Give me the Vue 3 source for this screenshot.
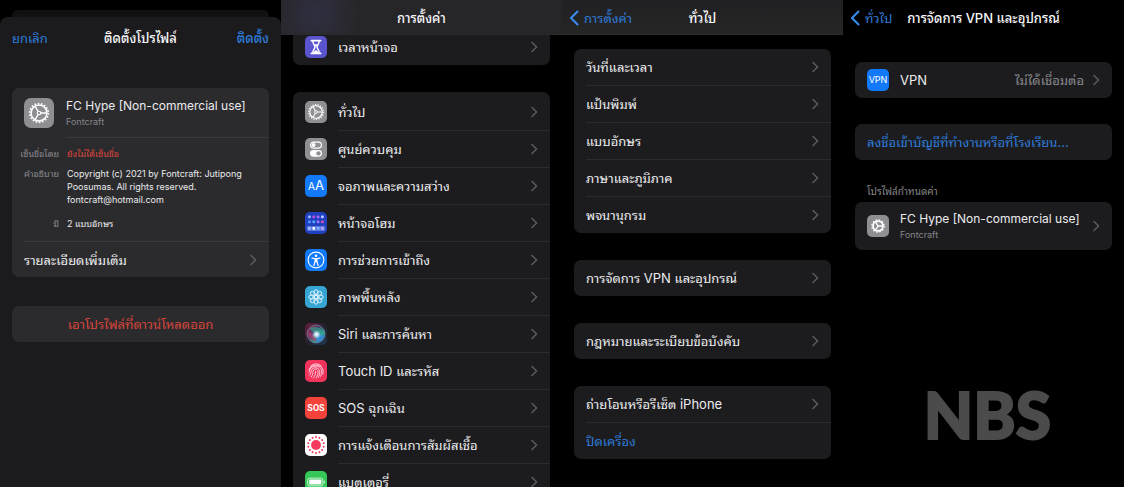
<script setup>
import { h } from 'vue'

const GearIcon = () =>
  h('svg', { viewBox: '0 0 24 24', 'aria-hidden': 'true', fill: 'none', stroke: '#fff' }, [
    h('circle', { cx: 12, cy: 12, r: 8, 'stroke-width': 1.4, 'stroke-dasharray': '1.4 1.393' }),
    h('circle', { cx: 12, cy: 12, r: 6.8, 'stroke-width': 1.3 }),
    h('circle', { cx: 12, cy: 12, r: 1.5, 'stroke-width': 1 }),
    h('path', { d: 'M13.6 12H18.4M11.2 10.6 8.7 6.3M11.2 13.4 8.7 17.7', 'stroke-width': 1.1 }),
  ])

const BoldGearIcon = () =>
  h('svg', { viewBox: '0 0 24 24', 'aria-hidden': 'true', fill: 'none', stroke: '#fff' }, [
    h('circle', { cx: 12, cy: 12, r: 6.7, 'stroke-width': 1.4, 'stroke-dasharray': '1.75 1.758' }),
    h('circle', { cx: 12, cy: 12, r: 5.4, 'stroke-width': 2 }),
    h('path', { d: 'M12 12H17M12 12 9.5 7.7M12 12 9.5 16.3', 'stroke-width': 1.5 }),
  ])

const Chevron = () =>
  h('svg', { class: 'chevron', viewBox: '0 0 7 12', 'aria-hidden': 'true' }, [
    h('path', { d: 'M1 1.5 5.6 6 1 10.5' }),
  ])

const settings = [
  { icon: 'gear', tone: 'gray', label: 'ทั่วไป' },
  { icon: 'control', tone: 'gray', label: 'ศูนย์ควบคุม' },
  { icon: 'display', tone: 'blue', label: 'จอภาพและความสว่าง' },
  { icon: 'home', tone: 'navy', label: 'หน้าจอโฮม' },
  { icon: 'access', tone: 'blue', label: 'การช่วยการเข้าถึง' },
  { icon: 'wallpaper', tone: 'cyan', label: 'ภาพพื้นหลัง' },
  { icon: 'siri', tone: 'siri', label: 'Siri และการค้นหา' },
  { icon: 'touch', tone: 'pink', label: 'Touch ID และรหัส' },
  { icon: 'sos', tone: 'red', label: 'SOS ฉุกเฉิน' },
  { icon: 'exposure', tone: 'white', label: 'การแจ้งเตือนการสัมผัสเชื้อ' },
  { icon: 'battery', tone: 'green', label: 'แบตเตอรี่' },
]

const appColors = [
  '#9db7ff', '#c04ad8', '#a66bf0', '#b8c8ff',
  '#4f9dff', '#58a6ff', '#9a7bff', '#d04fb0',
]

const dockColors = ['#9fc0ff', '#ffffff', '#7fb2ff', '#b9a8f5']

const general = [
  ['วันที่และเวลา', 'แป้นพิมพ์', 'แบบอักษร', 'ภาษาและภูมิภาค', 'พจนานุกรม'],
  ['การจัดการ VPN และอุปกรณ์'],
  ['กฎหมายและระเบียบข้อบังคับ'],
]

const ring = (n) => Array.from({ length: n }, (_, i) => (i * 360) / n)
</script>

<template>
  <main class="screens">
    <section class="screen install">
      <div class="behind"></div>
      <div class="sheet">
        <header class="sheet-bar">
          <button type="button" class="action">ยกเลิก</button>
          <h1>ติดตั้งโปรไฟล์</h1>
          <button type="button" class="action strong">ติดตั้ง</button>
        </header>
        <div class="card profile">
          <div class="profile-head">
            <span class="tile gray large"><GearIcon /></span>
            <div class="names">
              <h2>FC Hype [Non-commercial use]</h2>
              <p>Fontcraft</p>
            </div>
          </div>
          <dl>
            <dt>เซ็นชื่อโดย</dt>
            <dd class="unsigned">ยังไม่ได้เซ็นชื่อ</dd>
            <dt>คำอธิบาย</dt>
            <dd>Copyright (c) 2021 by Fontcraft: Jutipong Poosumas. All rights reserved. fontcraft@hotmail.com</dd>
            <dt class="spaced">มี</dt>
            <dd class="spaced">2 แบบอักษร</dd>
          </dl>
          <a href="#details" class="row more"><span class="body">รายละเอียดเพิ่มเติม<Chevron /></span></a>
        </div>
        <div class="card">
          <button type="button" class="row remove">เอาโปรไฟล์ที่ดาวน์โหลดออก</button>
        </div>
      </div>
    </section>

    <section class="screen settings">
      <header class="bar tinted"><h1>การตั้งค่า</h1></header>
      <nav class="list">
        <div class="card">
          <a href="#screen-time" class="row">
            <span class="tile indigo">
              <svg viewBox="0 0 24 24" aria-hidden="true" fill="none" stroke="#fff">
                <path d="M7 5h10M7 19h10" stroke-width="2" stroke-linecap="round" />
                <path d="M8.6 5.5c0 4 2.3 4.6 2.3 6.5s-2.3 2.5-2.3 6.5M15.4 5.5c0 4-2.3 4.6-2.3 6.5s2.3 2.5 2.3 6.5" stroke-width="1.6" />
                <path d="M9.5 18.5c.2-2 1.5-2.5 2.5-3.5 1 1 2.3 1.5 2.5 3.5zM10 9h4l-2 3z" fill="#fff" stroke="none" />
              </svg>
            </span>
            <span class="body">เวลาหน้าจอ<Chevron /></span>
          </a>
        </div>
        <div class="card tall">
          <a v-for="item in settings" :key="item.icon" :href="'#' + item.icon" class="row">
            <span class="tile" :class="item.tone">
              <GearIcon v-if="item.icon === 'gear'" />
              <svg v-else-if="item.icon === 'control'" viewBox="0 0 24 24" aria-hidden="true">
                <rect x="6" y="4.5" width="12" height="6.5" rx="3.25" fill="none" stroke="#fff" stroke-width="1.2" />
                <circle cx="9.3" cy="7.75" r="2.2" fill="#fff" />
                <rect x="5.5" y="13" width="13" height="7.5" rx="3.75" fill="#fff" />
                <circle cx="14.7" cy="16.75" r="2.4" fill="#8e8e93" />
              </svg>
              <span v-else-if="item.icon === 'display'" class="aa"><small>A</small>A</span>
              <svg v-else-if="item.icon === 'home'" viewBox="0 0 24 24" aria-hidden="true">
                <rect
                  v-for="(color, i) in appColors" :key="i"
                  :x="3.4 + (i % 4) * 4.7" :y="3.8 + Math.floor(i / 4) * 5.6"
                  width="2.9" height="2.9" rx=".8" :fill="color"
                />
                <rect x="2" y="15.2" width="20" height="5.4" rx="1.2" fill="#5a78e0" />
                <rect
                  v-for="(color, i) in dockColors" :key="color"
                  :x="3.4 + i * 4.7" y="16.4" width="3" height="3" rx=".8" :fill="color"
                />
              </svg>
              <svg v-else-if="item.icon === 'access'" viewBox="0 0 24 24" aria-hidden="true" fill="none" stroke="#fff" stroke-linecap="round">
                <circle cx="12" cy="12" r="8.6" stroke-width="1.2" />
                <circle cx="12" cy="7.4" r="1.4" fill="#fff" stroke="none" />
                <path d="M7.6 10 12 10.6 16.4 10M10.9 10.7v3L9.7 18M13.1 10.7v3l1.2 4.3" stroke-width="1.3" />
                <path d="M11 10.5h2v4h-2z" fill="#fff" stroke="none" />
              </svg>
              <svg v-else-if="item.icon === 'wallpaper'" viewBox="0 0 24 24" aria-hidden="true" fill="none" stroke="#e6f8ff" stroke-width="1">
                <ellipse v-for="a in ring(8)" :key="a" cx="12" cy="7.3" rx="2.3" ry="3.2" :transform="`rotate(${a} 12 12)`" />
                <circle cx="12" cy="12" r="1.8" />
              </svg>
              <svg v-else-if="item.icon === 'siri'" viewBox="0 0 24 24" aria-hidden="true">
                <defs>
                  <linearGradient id="siri-orb" x1="0" y1="0" x2="1" y2="1">
                    <stop offset="0" stop-color="#a8285c" />
                    <stop offset=".4" stop-color="#3f4068" />
                    <stop offset=".65" stop-color="#2a9d92" />
                    <stop offset="1" stop-color="#2463d0" />
                  </linearGradient>
                  <radialGradient id="siri-glow">
                    <stop offset="0" stop-color="#fff" />
                    <stop offset=".4" stop-color="#d9ecff" stop-opacity=".85" />
                    <stop offset="1" stop-color="#8fd0e8" stop-opacity="0" />
                  </radialGradient>
                </defs>
                <circle cx="12" cy="12" r="9.8" fill="url(#siri-orb)" stroke="#8c8fa0" stroke-width=".7" />
                <path d="M5 6c6-4 14-1 16 7-6 1-11-1-16-7z" fill="#35a88e" opacity=".6" />
                <path d="M3 10c5 0 9 3 10 10-6 0-10-4-10-10z" fill="#c23a6c" opacity=".6" />
                <path d="M12 12c4 0 8 1 9 3-2 4-5 6-8 6z" fill="#3b8ae6" opacity=".7" />
                <circle cx="12.5" cy="12.5" r="5" fill="url(#siri-glow)" />
              </svg>
              <svg v-else-if="item.icon === 'touch'" viewBox="0 0 24 24" aria-hidden="true" fill="none" stroke="#ffd5df" stroke-width="1" stroke-linecap="round">
                <path d="M6.2 6.5a8 8 0 0 1 11.6 0M4.4 10.5C6 3.8 18 3.8 19.6 10.5c.3 1.7.2 3.3-.2 4.7M4.3 13.5c.6-1 .7-2 1.1-3.2 1.7-5 11.5-5 12.6.7.4 2.4 0 4.7-.9 6.7M5 16.5c1.7-1.7 1.5-3.6 2-5.3 1.1-3.7 8.1-3.7 9 .6.4 2.5-.2 5-1.4 7.2M6.6 18.5c2.4-2.3 1.8-4.7 2.2-6.5.7-2.6 4.9-2.5 5.4.3.3 2.6-.5 5-2 7.3M9 19.7c2.3-2.5 2.5-4.7 2.5-7.2" />
              </svg>
              <span v-else-if="item.icon === 'sos'" class="sos">SOS</span>
              <svg v-else-if="item.icon === 'exposure'" viewBox="0 0 24 24" aria-hidden="true" fill="#f23b5f">
                <circle cx="12" cy="12" r="5.4" />
                <circle v-for="a in ring(14)" :key="a" cx="12" cy="3.4" r="1.1" :transform="`rotate(${a} 12 12)`" />
              </svg>
              <svg v-else viewBox="0 0 24 24" aria-hidden="true">
                <rect x="3" y="7.8" width="16.5" height="8.4" rx="2.2" fill="none" stroke="#d8f5df" stroke-width="1" />
                <rect x="4.6" y="9.3" width="13.3" height="5.4" rx="1" fill="#fff" />
                <path d="M20.6 10.3c1.3.5 1.3 2.9 0 3.4z" fill="#fff" />
              </svg>
            </span>
            <span class="body">{{ item.label }}<Chevron /></span>
          </a>
        </div>
      </nav>
    </section>

    <section class="screen general">
      <header class="bar">
        <a href="#settings" class="back">
          <svg viewBox="0 0 10 16" aria-hidden="true"><path d="M8.5 1.5 2 8l6.5 6.5" /></svg>การตั้งค่า
        </a>
        <h1>ทั่วไป</h1>
      </header>
      <nav class="list">
        <div v-for="(group, g) in general" :key="g" class="card">
          <a v-for="label in group" :key="label" href="#general" class="row"><span class="body">{{ label }}<Chevron /></span></a>
        </div>
        <div class="card">
          <a href="#reset" class="row"><span class="body">ถ่ายโอนหรือรีเซ็ต iPhone<Chevron /></span></a>
          <button type="button" class="row link"><span class="body">ปิดเครื่อง</span></button>
        </div>
      </nav>
    </section>

    <section class="screen vpn">
      <header class="bar clear">
        <a href="#general" class="back">
          <svg viewBox="0 0 10 16" aria-hidden="true"><path d="M8.5 1.5 2 8l6.5 6.5" /></svg>ทั่วไป
        </a>
        <h1>การจัดการ VPN และอุปกรณ์</h1>
      </header>
      <div class="list">
        <div class="card">
          <a href="#vpn" class="row">
            <span class="tile blue vpn-tile" aria-hidden="true">VPN</span>
            <span class="body">VPN<span class="value">ไม่ได้เชื่อมต่อ</span><Chevron /></span>
          </a>
        </div>
        <div class="card">
          <button type="button" class="row link"><span class="body">ลงชื่อเข้าบัญชีที่ทำงานหรือที่โรงเรียน...</span></button>
        </div>
        <div class="group">
          <h3>โปรไฟล์กำหนดค่า</h3>
          <div class="card">
            <a href="#profile" class="row double">
              <span class="tile gray"><BoldGearIcon /></span>
              <span class="body">
                <span class="names">
                  <strong>FC Hype [Non-commercial use]</strong>
                  <small>Fontcraft</small>
                </span>
                <Chevron />
              </span>
            </a>
          </div>
        </div>
      </div>
      <p class="mark">NBS</p>
    </section>
  </main>
</template>

<style>
body {
  background: #000;
  overflow: hidden;
}
</style>

<style scoped>
.screens {
  display: grid;
  grid-template-columns: repeat(4, minmax(0, 1fr));
  height: 100vh;
  background: #000;
  color: #ececee;
  font-family: Inter, "Noto Sans Thai Looped", sans-serif;
  font-size: 13px;
  line-height: 20px;
}
* {
  box-sizing: border-box;
}
h1, h2, h3, p, dl, dd {
  margin: 0;
}
a, button {
  color: inherit;
  font: inherit;
  text-decoration: none;
}
button {
  padding: 0;
  border: 0;
  background: none;
  cursor: pointer;
}
h1 {
  font-size: 13px;
  font-weight: 500;
  color: #f6f6f8;
  white-space: nowrap;
}
.screen {
  display: flex;
  flex-direction: column;
  min-height: 0;
  overflow: hidden;
}
.bar {
  position: relative;
  z-index: 1;
  display: grid;
  grid-template-columns: 1fr auto 1fr;
  align-items: center;
  flex: none;
  height: 35px;
  padding: 2px 7px 0;
  background: linear-gradient(#202022, #262627);
  border-bottom: 1px solid #2a2a2c;
}
.bar h1 {
  grid-column: 2;
}
.bar.tinted {
  background: radial-gradient(circle at 35px 14px, #302f42, #262628 45px);
}
.bar.clear {
  background: none;
  border-color: transparent;
}
.back {
  display: flex;
  align-items: center;
  gap: 5px;
  color: #2f7bd9;
}
.back svg {
  width: 10px;
  height: 16px;
  fill: none;
  stroke: #3b8cf0;
  stroke-width: 2;
  stroke-linecap: round;
  stroke-linejoin: round;
}
.list {
  display: flex;
  flex-direction: column;
  gap: 27px;
  padding: 14px 12px 0;
}
.settings .list {
  margin-top: -6px;
  padding-top: 0;
}
.vpn .list {
  gap: 26px;
  padding-top: 27px;
}
.card {
  flex: none;
  border-radius: 7px;
  background: #1c1c1e;
  overflow: hidden;
}
.tall {
  padding-top: 2px;
}
.row {
  display: flex;
  align-items: stretch;
  gap: 11px;
  width: 100%;
  min-height: 36px;
  padding-left: 12px;
  text-align: left;
}
.body {
  display: flex;
  align-items: center;
  flex: 1;
  min-width: 0;
  padding-right: 12px;
}
.row + .row {
  min-height: 37px;
}
.row + .row .body {
  border-top: 1px solid #2b2b2d;
}
.chevron {
  flex: none;
  width: 7px;
  height: 12px;
  margin-left: auto;
  fill: none;
  stroke: #5c5c60;
  stroke-width: 1.5;
  stroke-linecap: round;
  stroke-linejoin: round;
}
.link {
  color: #2f7bd9;
}
.tile {
  display: flex;
  align-items: center;
  justify-content: center;
  align-self: center;
  flex: none;
  width: 22px;
  height: 22px;
  border-radius: 5px;
  color: #fff;
  overflow: hidden;
}
.tile svg {
  width: 22px;
  height: 22px;
}
.gray { background: #8e8e93; }
.blue { background: #1279f8; }
.navy { background: #2040c0; }
.cyan { background: #37a5d4; }
.pink { background: #f2345c; }
.red { background: #f5423a; }
.white { background: #fff; }
.green { background: #36c759; }
.indigo { background: #5a55cf; }
.siri { background: linear-gradient(135deg, #6a1e40, #23202e 50%, #1c3a52); }
.aa {
  font-size: 13px;
}
.aa small {
  font-size: 10px;
}
.sos {
  font-family: Roboto, sans-serif;
  font-size: 9px;
  font-weight: 700;
}
.vpn-tile {
  font-size: 9px;
}
.value {
  margin-left: auto;
  color: #8a8a8f;
}
.value + .chevron {
  margin-left: 9px;
}

.behind {
  flex: none;
  height: 7px;
  margin: 10px 12px 0;
  border-radius: 6px 6px 0 0;
  background: #111112;
}
.sheet {
  flex: 1;
  padding: 0 12px;
  border-radius: 8px 8px 0 0;
  background: #1b1b1d;
}
.sheet .card {
  background: #2b2b2d;
}
.sheet-bar {
  display: grid;
  grid-template-columns: 1fr auto 1fr;
  align-items: center;
  height: 42px;
  margin-bottom: 29px;
}
.action {
  justify-self: start;
  color: #2f7bd9;
}
.strong {
  justify-self: end;
  font-weight: 500;
}
.sheet .profile {
  margin-bottom: 29px;
}
.profile-head {
  display: flex;
  gap: 12px;
  padding-left: 12px;
}
.large {
  width: 30px;
  height: 30px;
  border-radius: 7px;
}
.large svg {
  width: 28px;
  height: 28px;
}
.names {
  display: flex;
  flex-direction: column;
  flex: 1;
}
.profile-head .names {
  height: 50px;
  padding-top: 8px;
  border-bottom: 1px solid #39393b;
}
.double .names {
  padding-bottom: 3px;
}
h2, strong {
  font-size: 12px;
  font-weight: 400;
  line-height: 20px;
  white-space: nowrap;
}
.names p, .names small {
  color: #85858a;
  font-size: 9px;
  line-height: 12px;
}
dl {
  display: grid;
  grid-template-columns: 47px 1fr;
  column-gap: 8px;
  row-gap: 7px;
  padding: 9px 20px 11px 0;
  font-size: 9px;
  line-height: 13px;
}
dt {
  color: #8a8a8f;
  text-align: right;
}
.spaced {
  margin-top: 4px;
}
.unsigned {
  color: #d9453c;
}
.more .body {
  border-top: 1px solid #39393b;
}
.remove {
  justify-content: center;
  align-items: center;
  padding: 0;
  color: #d9453c;
}
h3 {
  padding-left: 12px;
  padding-bottom: 3px;
  margin-top: -3px;
  color: #85858a;
  font-size: 10px;
  font-weight: 400;
  line-height: 16px;
}
.double {
  min-height: 48px;
}
.mark {
  margin: auto 73px 32px auto;
  color: #4b4b4b;
  font-family: Lato, sans-serif;
  font-size: 64px;
  font-weight: 900;
  line-height: 80px;
  -webkit-text-stroke: 2px #4b4b4b;
  stroke-linejoin: round;
}
</style>
